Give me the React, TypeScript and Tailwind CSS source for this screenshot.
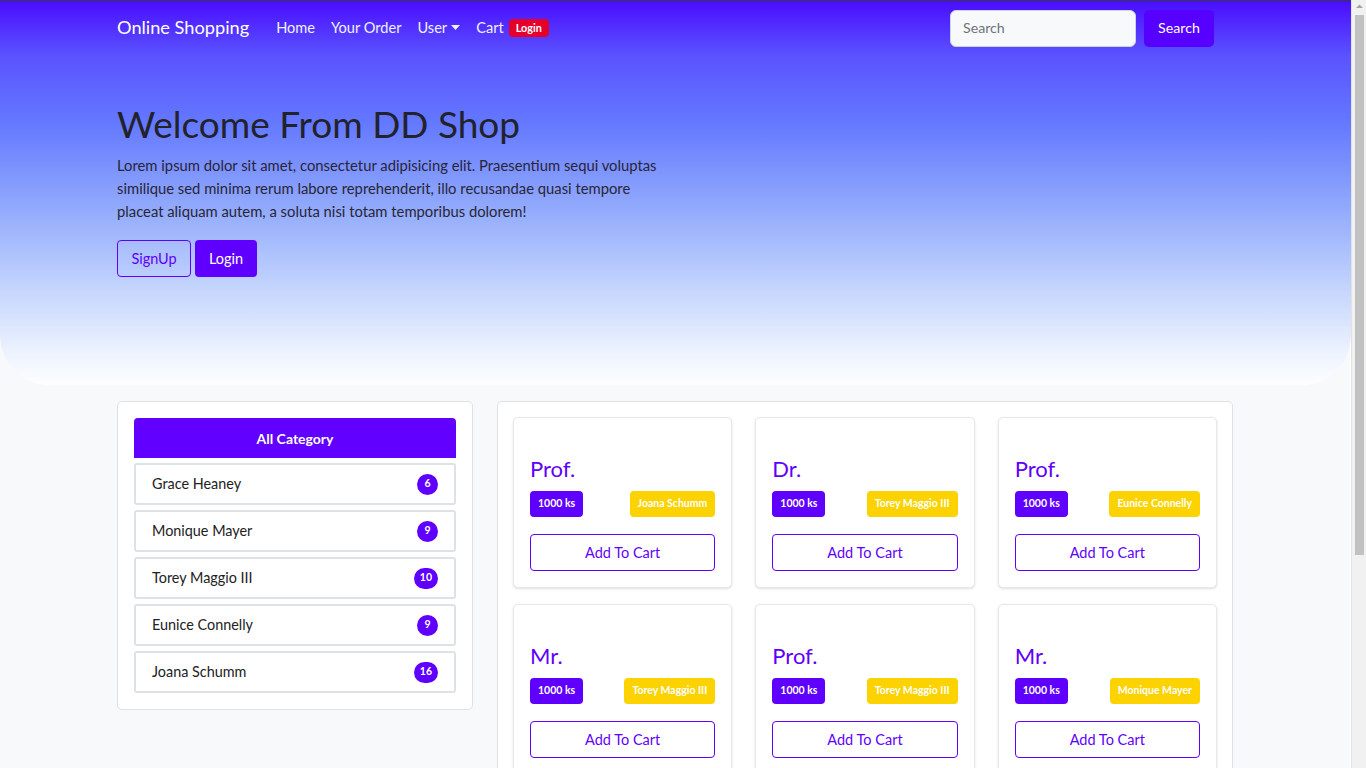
const kategorie = [
  { nome: "Grace Heaney", n: 6 },
  { nome: "Monique Mayer", n: 9 },
  { nome: "Torey Maggio III", n: 10 },
  { nome: "Eunice Connelly", n: 9 },
  { nome: "Joana Schumm", n: 16 },
];

const prodotti = [
  { titolo: "Prof.", cat: "Joana Schumm" },
  { titolo: "Dr.", cat: "Torey Maggio III" },
  { titolo: "Prof.", cat: "Eunice Connelly" },
  { titolo: "Mr.", cat: "Torey Maggio III" },
  { titolo: "Prof.", cat: "Torey Maggio III" },
  { titolo: "Mr.", cat: "Monique Mayer" },
];

function Caret() {
  return (
    <svg width="9" height="6" viewBox="0 0 9 6" className="ml-1 inline-block">
      <path d="M0 0 L9 0 L4.5 5 Z" fill="currentColor" />
    </svg>
  );
}

// barra di scorrimento finta, come nello screenshot
function FakeScrollbar() {
  return (
    <div className="fixed right-0 top-0 flex h-screen w-[15px] flex-col items-center border-l border-[#e2e2e2] bg-[#f1f1f1]">
      <svg width="15" height="13" viewBox="0 0 15 13" className="shrink-0">
        <path d="M4 8 L7.5 4.5 L11 8 Z" fill="#a3a3a3" />
      </svg>
      <div className="mt-[2px] h-[540px] w-[9px] bg-[#c1c1c1]" />
    </div>
  );
}

export default function App() {
  return (
    <div className="min-h-[1050px] w-[1350px] bg-[#f8f9fa] text-[#212529]" style={{ fontFamily: "Lato, 'Open Sans', sans-serif" }}>
      {/* hero con navbar */}
      <div className="h-[385px] w-[1351px] rounded-b-[50px] border-t border-[#3a3a3a] bg-[linear-gradient(to_bottom,#4a0dff_0%,#5a52ff_14%,#6479ff_32%,#94acfc_55%,#c9d9fd_77%,#eef3fe_92%,#fdfeff_100%)]">
        <nav className="ml-[117px] flex h-[54px] w-[1116px] items-center">
          <span className="mr-[19px] text-[18.2px] text-white">Online Shopping</span>
          <div className="flex items-center text-[14.6px] text-[#eef2ff]">
            <a className="px-2">Home</a>
            <a className="px-2">Your Order</a>
            <a className="flex items-center px-2">User<Caret /></a>
            <a className="flex items-center px-2">
              Cart
              <span className="ml-[5px] rounded-[4px] bg-[#e4002b] px-[7px] py-[2px] text-[10.8px] font-bold leading-[14px] text-white">Login</span>
            </a>
          </div>
          <div className="ml-auto mr-[19px] flex items-center gap-2">
            <div className="flex h-[37px] w-[186px] items-center rounded-[6px] border border-[#ced4da] bg-[#f8f9fa] px-3 text-[14.2px] text-[#6c757d]">Search</div>
            <button className="h-[37px] w-[70px] rounded-[5px] bg-[#5600ff] text-[14.2px] text-white">Search</button>
          </div>
        </nav>

        <div className="ml-[117px] w-[1116px] pt-[45px]">
          <h1 className="mb-[6px] text-[37px] leading-[48px] text-[#22222c]">Welcome From DD Shop</h1>
          <p className="max-w-[546px] text-[14.8px] leading-[23px] text-[#282536]">
            Lorem ipsum dolor sit amet, consectetur adipisicing elit. Praesentium sequi voluptas similique sed minima rerum labore reprehenderit, illo recusandae quasi tempore placeat aliquam autem, a soluta nisi totam temporibus dolorem!
          </p>
          <div className="mt-[17px] flex gap-1">
            <button className="h-[37px] w-[74px] rounded-[4px] border border-[#5f00ff] text-[14.5px] text-[#5f00ff]">SignUp</button>
            <button className="h-[37px] w-[62px] rounded-[4px] bg-[#5f00ff] text-[14.5px] text-white">Login</button>
          </div>
        </div>
      </div>

      {/* contenuto */}
      <div className="mx-auto mt-4 grid max-w-[1116px] grid-cols-[356px_736px] items-start gap-6">
        <div className="rounded-[5px] border border-[#dee2e6] bg-white p-4">
          <div className="flex h-[40px] items-center justify-center rounded-t-[4px] bg-[#6100ff] text-[14px] font-bold text-white">All Category</div>
          <div className="mt-[5px] flex flex-col gap-[5px]">
            {kategorie.map((k) => (
              <div key={k.nome} className="flex h-[42px] items-center justify-between rounded-[3px] border-2 border-[#dee2e6] pl-4 pr-4 text-[14.4px] text-[#222]">
                <span>{k.nome}</span>
                <span className="flex h-[21px] min-w-[21px] items-center justify-center rounded-full bg-[#5f00ff] px-[6px] text-[10.5px] font-bold text-white">{k.n}</span>
              </div>
            ))}
          </div>
        </div>

        <div className="rounded-[5px] border border-[#dee2e6] bg-white p-[15px]">
          <div className="grid grid-cols-3 gap-x-[23px] gap-y-4">
            {prodotti.map((p, i) => (
              <div key={i} className="rounded-[5px] border border-[#e6e8ec] bg-white px-4 pb-4 pt-[36px] shadow-sm">
                <div className="text-[22px] leading-[29px] text-[#5f00ff]">{p.titolo}</div>
                <div className="mt-[8px] flex h-[26px] items-center justify-between">
                  <span className="flex h-[26px] items-center rounded-[4px] bg-[#5f00ff] px-2 text-[10.5px] font-bold text-white">1000 ks</span>
                  <span className="flex h-[26px] items-center rounded-[4px] bg-[#fcd200] px-2 text-[10.5px] font-bold text-white">{p.cat}</span>
                </div>
                <button className="mt-[17px] h-[37px] w-full rounded-[4px] border border-[#5f00ff] text-[14.5px] text-[#5f00ff]">Add To Cart</button>
              </div>
            ))}
          </div>
        </div>
      </div>
      <FakeScrollbar />
    </div>
  );
}
